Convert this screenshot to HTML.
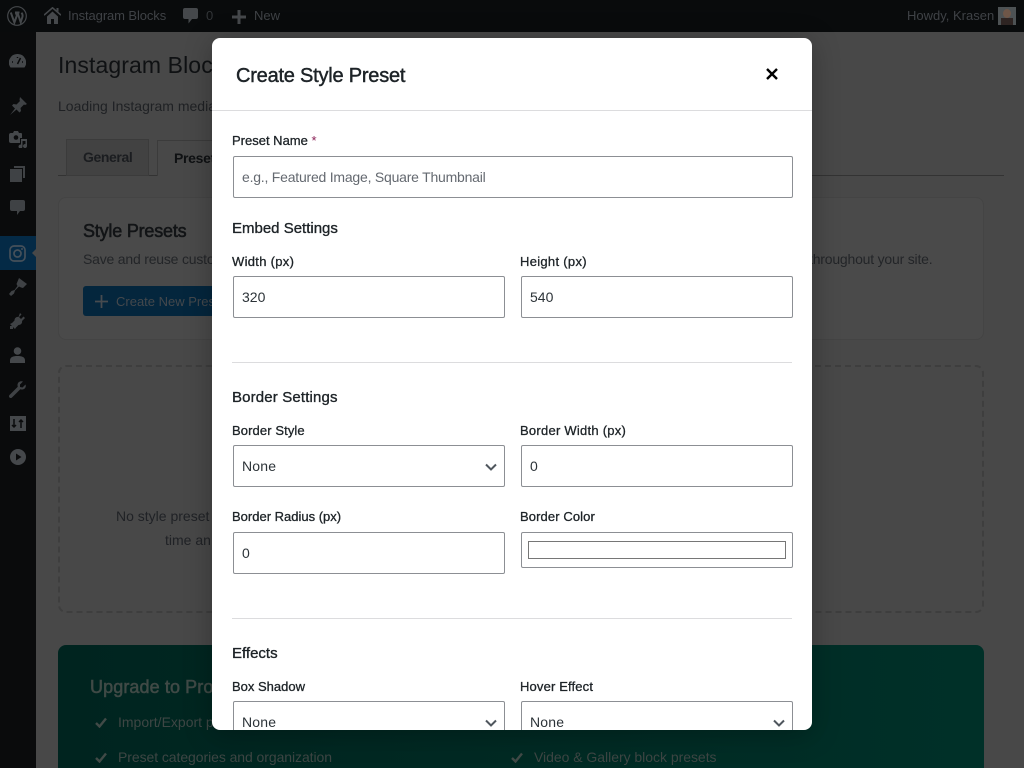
<!DOCTYPE html>
<html lang="en"><head><meta charset="utf-8"><title>Create Style Preset</title>
<style>
*{box-sizing:border-box}
html,body{margin:0;padding:0;width:1024px;height:768px;overflow:hidden;background:#484848;font-family:"Liberation Sans",sans-serif}
.a{position:absolute;white-space:nowrap;line-height:20px}
#bar{position:absolute;left:0;top:0;width:1024px;height:32px;background:#090b0c}
#side{position:absolute;left:0;top:32px;width:36px;height:736px;background:#0a0b0c}
#side svg,#bar svg{position:absolute}
.d{color:#3f4144;font-size:14px;letter-spacing:-.2px}
#modal{position:absolute;left:212px;top:38px;width:600px;height:692px;background:#fff;border-radius:8px;overflow:hidden;box-shadow:0 4px 28px rgba(0,0,0,.28)}
#modal .a{color:#1d2327}
.l{font-size:13px;font-weight:500;-webkit-text-stroke:.3px #1d2327}
.h{font-size:15px;-webkit-text-stroke:.35px #1d2327}
.i{position:absolute;height:42px;border:1px solid #8c8f94;border-radius:2px;background:#fff;font-size:14px;line-height:40px;padding-left:8px;color:#2c3338}
.i svg{position:absolute;right:7px;top:17px}
.s{position:absolute;left:20px;width:560px;height:1px;background:#dcdcde}
</style></head><body>

<!-- page behind -->
<div class="a" style="left:58px;top:50px;font-size:23px;line-height:30px;color:#0f1113;letter-spacing:.1px">Instagram Blocks</div>
<div class="a d" style="left:58px;top:96px;color:#1f2124;letter-spacing:0">Loading Instagram media</div>
<div style="position:absolute;left:58px;top:175px;width:946px;height:1px;background:#333"></div>
<div style="position:absolute;left:66px;top:139px;width:83px;height:37px;background:#424242;border:1px solid #3b3b3b"></div>
<div class="a" style="left:83px;top:147px;font-size:14px;font-weight:bold;color:#1b1d20;letter-spacing:-.4px">General</div>
<div style="position:absolute;left:157px;top:140px;width:60px;height:36px;background:#484848;border:1px solid #3b3b3b;border-bottom:0"></div>
<div class="a" style="left:174px;top:148px;font-size:14px;font-weight:bold;color:#0f1113;letter-spacing:-.3px">Preset</div>
<div style="position:absolute;left:58px;top:197px;width:926px;height:143px;background:#4a4a4a;border:1px solid #444;border-radius:8px"></div>
<div class="a" style="left:83px;top:221px;font-size:18px;color:#121416;-webkit-text-stroke:.55px #121416;letter-spacing:-.2px">Style Presets</div>
<div class="a d" style="left:83px;top:249px;color:#232528">Save and reuse custo</div>
<div class="a d" style="left:809px;top:249px;color:#232528">throughout your site.</div>
<div style="position:absolute;left:83px;top:286px;width:140px;height:30px;background:#04263d;border-radius:3px"></div>
<svg style="position:absolute;left:95px;top:295px" width="13" height="13" viewBox="0 0 13 13"><path d="M6.500 0v13M0 6.500h13" stroke="#474b4f" stroke-width="1.800"/></svg>
<div class="a" style="left:116px;top:292px;font-size:13px;color:#44484c">Create New Prese</div>
<div style="position:absolute;left:58px;top:365px;width:926px;height:248px;border:2px dashed #3e3e3e;border-radius:8px"></div>
<div class="a d" style="left:116px;top:506px;color:#202226;letter-spacing:0">No style preset</div>
<div class="a d" style="left:165px;top:530px;color:#202226;letter-spacing:0">time an</div>
<div style="position:absolute;left:58px;top:645px;width:926px;height:123px;background:linear-gradient(90deg,#00241f,#003028);border-radius:8px 8px 0 0"></div>
<div class="a" style="left:90px;top:677px;font-size:18px;color:#404a46;-webkit-text-stroke:.55px #404a46;letter-spacing:.1px">Upgrade to Pro</div>
<div class="a" style="left:118px;top:712px;font-size:14px;color:#3e4644">Import/Export p</div>
<div class="a" style="left:118px;top:747px;font-size:14px;color:#3e4644;letter-spacing:-.07px">Preset categories and organization</div>
<div class="a" style="left:534px;top:747px;font-size:14px;color:#3e4644;letter-spacing:-.03px">Video &amp; Gallery block presets</div>
<svg style="position:absolute;left:95px;top:717px" width="12" height="11" viewBox="0 0 12 11"><path d="M1 6l3.500 3.500L11 1.500" fill="none" stroke="#414a47" stroke-width="2.400"/></svg>
<svg style="position:absolute;left:95px;top:752px" width="12" height="11" viewBox="0 0 12 11"><path d="M1 6l3.500 3.500L11 1.500" fill="none" stroke="#414a47" stroke-width="2.400"/></svg>
<svg style="position:absolute;left:511px;top:752px" width="12" height="11" viewBox="0 0 12 11"><path d="M1 6l3.500 3.500L11 1.500" fill="none" stroke="#414a47" stroke-width="2.400"/></svg>

<!-- admin bar -->
<div id="bar">
<svg style="left:7px;top:6px" width="20" height="20" viewBox="0 0 20 20"><circle cx="10" cy="10" r="9.300" fill="none" stroke="#45484b" stroke-width="1.200"/><path d="M3.800 6.500l3.600 10 2.500-7-1.200-3M8 6.500h4.500M10.500 6.500l3.200 9.800 1.700-5.300c.6-1.800-.1-3.200-.9-4.300" fill="none" stroke="#45484b" stroke-width="2"/></svg>
<svg style="left:44px;top:7px" width="17" height="17" viewBox="0 0 17 17"><path d="M0 8.200L8.500.8 17 8.200" fill="none" stroke="#45484b" stroke-width="1.600"/><path d="M12.500 1h2v4l-2-1.700zM3 9.500l5.500-5 5.500 5V17h-4v-5H7v5H3z" fill="#45484b"/></svg>
<div class="a" style="left:68px;top:6px;font-size:13px;color:#3f4246;letter-spacing:-.1px">Instagram Blocks</div>
<svg style="left:183px;top:8px" width="15" height="17" viewBox="0 0 15 17"><path d="M2 0h11a2 2 0 0 1 2 2v7a2 2 0 0 1-2 2H9l-3.500 4.500V11H2a2 2 0 0 1-2-2V2a2 2 0 0 1 2-2z" fill="#45484b"/></svg>
<div class="a" style="left:206px;top:6px;font-size:13px;color:#323538">0</div>
<svg style="left:232px;top:10px" width="14" height="14" viewBox="0 0 14 14"><path d="M7 0v14M0 7h14" stroke="#45484b" stroke-width="3"/></svg>
<div class="a" style="left:254px;top:6px;font-size:13px;color:#3f4246">New</div>
<div class="a" style="left:907px;top:6px;font-size:13px;color:#3f4246">Howdy, Krasen</div>
<div style="position:absolute;left:998px;top:7px;width:18px;height:18px;background:#4d5254;overflow:hidden"><div style="position:absolute;left:5px;top:2px;width:8px;height:9px;border-radius:50%;background:#6e5648"></div><div style="position:absolute;left:3px;top:11px;width:12px;height:7px;background:#2e2422"></div></div>
</div>

<!-- sidebar -->
<div id="side">
<svg style="left:9px;top:22px" width="17" height="14" viewBox="0 0 17 14"><path d="M8.500 0A8.500 8.500 0 0 0 1.500 13.500h14A8.500 8.500 0 0 0 8.500 0z" fill="#45484b"/><path d="M8.500 10L11.500 4M3 8h1M13 8h1M8.500 3v1" stroke="#0a0b0c" stroke-width="1.500"/></svg>
<svg style="left:9px;top:65px" width="18" height="18" viewBox="0 0 18 18"><path d="M11 0l7 7-2 1-1-.5-3.500 3.500.5 3-1.500 1.500-3-3L1 18l5-6.500-3-3L4.500 7l3 .5L11 4l-.5-1z" fill="#3f4245"/></svg>
<svg style="left:8px;top:98px" width="19" height="18" viewBox="0 0 19 18"><path d="M3 3h2l1-2h4l1 2h2a1 1 0 0 1 1 1v4h-2v5H3a2 2 0 0 1-2-2V5a2 2 0 0 1 2-2z" fill="#45484b"/><circle cx="8" cy="7.500" r="2.300" fill="#0a0b0c"/><path d="M13 9h6v7a2 2 0 1 1-1.500-1.900V11h-3v5.500a2 2 0 1 1-1.500-1.900z" fill="#45484b"/></svg>
<svg style="left:10px;top:134px" width="15" height="16" viewBox="0 0 15 16"><path d="M4 0h11v12h-2V2H4z" fill="#3f4245"/><path d="M0 3h12v13H0z" fill="#3f4245"/></svg>
<svg style="left:10px;top:168px" width="15" height="17" viewBox="0 0 15 17"><path d="M2 0h11a2 2 0 0 1 2 2v7a2 2 0 0 1-2 2H10l-3 4v-4H2a2 2 0 0 1-2-2V2a2 2 0 0 1 2-2z" fill="#3f4245"/></svg>
<div style="position:absolute;left:0;top:204px;width:36px;height:34px;background:#042a46"></div>
<div style="position:absolute;left:32px;top:216px;width:0;height:0;border:5px solid transparent;border-right-color:#484848;border-left:0"></div>
<svg style="left:9px;top:213px" width="17" height="17" viewBox="0 0 17 17"><rect x="1" y="1" width="15" height="15" rx="4" fill="none" stroke="#45505a" stroke-width="1.700"/><circle cx="8.500" cy="8.500" r="3.500" fill="none" stroke="#45505a" stroke-width="1.700"/><circle cx="13" cy="4" r="1" fill="#45505a"/></svg>
<svg style="left:9px;top:246px" width="18" height="18" viewBox="0 0 18 18"><path d="M10 0l8 6-4 4-2-.5-2-1-4 4-1 3-3 2.500-2-2 2.500-3 3-1 3-4-1-2z" fill="#3f4245"/></svg>
<svg style="left:9px;top:281px" width="17" height="16" viewBox="0 0 17 16"><path d="M11 0l1.500 1.500-2.500 2.500 2 2 2.500-2.500L16 5l-3 3c.5 2-1 4-3.500 4L7 14.500 6 16 1 11l2-1 2.500-2.500c0-2.500 2-4 4-3.500zM1 13h3v3H1z" fill="#3f4245"/></svg>
<svg style="left:10px;top:315px" width="15" height="17" viewBox="0 0 15 17"><circle cx="7.500" cy="4" r="3.800" fill="#45484b"/><path d="M0 13.500C0 10 3 9 7.500 9S15 10 15 13.500V16H0z" fill="#45484b"/></svg>
<svg style="left:9px;top:349px" width="17" height="17" viewBox="0 0 17 17"><path d="M16.500 3.500l-3 3L11 6V3.500l3-3C11.500-.5 8.500 1 8.500 4c0 .7.100 1.200.300 1.700L.5 14c-.7.700-.7 1.800 0 2.500s1.800.7 2.500 0l8.300-8.300c3.300 1.200 6.500-1.500 5.200-4.700z" fill="#3f4245"/></svg>
<svg style="left:10px;top:384px" width="16" height="15" viewBox="0 0 16 15"><path d="M0 0h16v15H0z" fill="#45484b"/><path d="M4 3v8M2 9l2 2 2-2M11 12V4M9 6l2-2 2 2" fill="none" stroke="#0a0b0c" stroke-width="1.500"/></svg>
<svg style="left:10px;top:417px" width="16" height="16" viewBox="0 0 16 16"><circle cx="8" cy="8" r="8" fill="#45484b"/><path d="M6 4.500v7l5.500-3.500z" fill="#0a0b0c"/></svg>
</div>

<!-- modal -->
<div id="modal">
<div class="a" style="left:24px;top:25px;font-size:20px;line-height:26px;-webkit-text-stroke:.45px #1d2327;letter-spacing:-.22px">Create Style Preset</div>
<svg style="position:absolute;left:554px;top:30px" width="12" height="12" viewBox="0 0 12 12"><path d="M1 1l10 10M11 1L1 11" stroke="#000" stroke-width="2.400"/></svg>
<div style="position:absolute;left:0;top:72px;width:600px;height:1px;background:#dcdcde"></div>

<div class="a l" style="left:20px;top:93px">Preset Name <span style="color:#8a1f55;-webkit-text-stroke:0">*</span></div>
<div class="i" style="left:21px;top:118px;width:560px;color:#646970;letter-spacing:-.22px">e.g., Featured Image, Square Thumbnail</div>

<div class="a h" style="left:20px;top:181px">Embed Settings</div>
<div class="a l" style="left:20px;top:214px;letter-spacing:.3px">Width (px)</div>
<div class="a l" style="left:308px;top:214px;letter-spacing:.3px">Height (px)</div>
<div class="i" style="left:21px;top:238px;width:272px">320</div>
<div class="i" style="left:309px;top:238px;width:272px">540</div>

<div class="s" style="top:324px"></div>

<div class="a h" style="left:20px;top:350px;letter-spacing:.15px">Border Settings</div>
<div class="a l" style="left:20px;top:383px;letter-spacing:.1px">Border Style</div>
<div class="a l" style="left:308px;top:383px;letter-spacing:.25px">Border Width (px)</div>
<div class="i" style="left:21px;top:407px;width:272px;letter-spacing:.2px">None<svg width="12" height="8" viewBox="0 0 12 8"><path d="M1 1.500l5 5 5-5" fill="none" stroke="#50575e" stroke-width="2"/></svg></div>
<div class="i" style="left:309px;top:407px;width:272px">0</div>
<div class="a l" style="left:20px;top:469px">Border Radius (px)</div>
<div class="a l" style="left:308px;top:469px;letter-spacing:.1px">Border Color</div>
<div class="i" style="left:21px;top:494px;width:272px">0</div>
<div class="i" style="left:309px;top:494px;width:272px;height:36px"><div style="position:absolute;left:6px;top:8px;width:258px;height:18px;border:1px solid #767676;background:#fff"></div></div>

<div class="s" style="top:580px"></div>

<div class="a h" style="left:20px;top:606px">Effects</div>
<div class="a l" style="left:20px;top:639px">Box Shadow</div>
<div class="a l" style="left:308px;top:639px;letter-spacing:.15px">Hover Effect</div>
<div class="i" style="left:21px;top:663px;width:272px;letter-spacing:.2px">None<svg width="12" height="8" viewBox="0 0 12 8"><path d="M1 1.500l5 5 5-5" fill="none" stroke="#50575e" stroke-width="2"/></svg></div>
<div class="i" style="left:309px;top:663px;width:272px;letter-spacing:.2px">None<svg width="12" height="8" viewBox="0 0 12 8"><path d="M1 1.500l5 5 5-5" fill="none" stroke="#50575e" stroke-width="2"/></svg></div>
</div>
</body></html>
